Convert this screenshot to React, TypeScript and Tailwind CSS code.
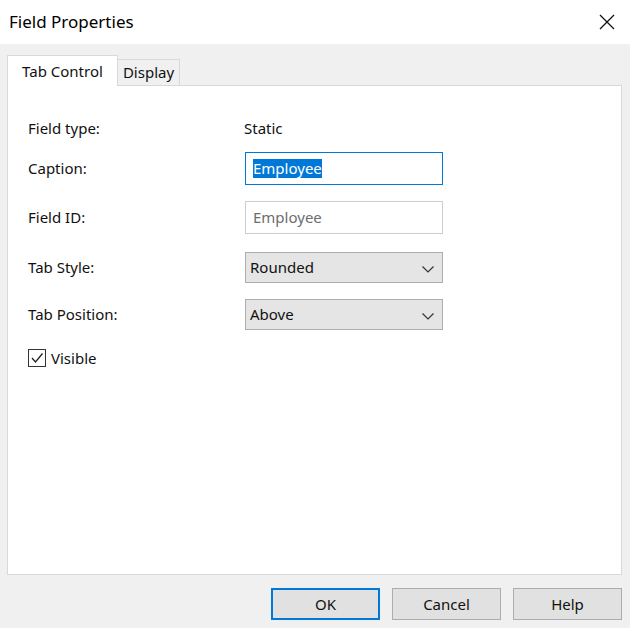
import React from "react";

const Chevron = () => (
  <svg width="14" height="14" viewBox="0 0 14 14" className="absolute right-[7px] top-[9px]">
    <path d="M1.5 4.5 L7 10 L12.5 4.5" fill="none" stroke="#333" strokeWidth="1.2" />
  </svg>
);

export default function App() {
  const font = { fontFamily: '"Noto Sans", "Open Sans", sans-serif' };
  return (
    <div className="w-[630px] h-[628px] bg-[#f0f0f0] flex flex-col text-[15px] text-[#111]" style={font}>
      <div className="h-[44px] bg-white flex items-center justify-between pl-[9px] pr-[14px] shrink-0">
        <span className="text-[17px] text-black">Field Properties</span>
        <svg width="18" height="18" viewBox="0 0 18 18"><path d="M2 2 L16 16 M16 2 L2 16" stroke="#111" strokeWidth="1.3" /></svg>
      </div>
      <div className="pl-[7px] pr-[8px] pt-[11px] flex flex-col">
        <div className="flex items-end h-[30px]">
          <div className="w-[111px] h-[31px] bg-white border border-b-0 border-[#d9d9d9] flex items-center justify-center relative top-[1px] z-10">Tab Control</div>
          <div className="w-[62px] h-[26px] bg-[#f0f0f0] border border-b-0 border-l-0 border-[#d9d9d9] flex items-center justify-center">Display</div>
        </div>
        <div className="h-[490px] bg-white border border-[#d9d9d9] pl-[20px] pt-[30px] flex flex-col">
          <div className="flex items-center h-[24px]">
            <span className="w-[216px]">Field type:</span><span>Static</span>
          </div>
          <div className="flex items-center mt-[12px]">
            <span className="w-[217px]">Caption:</span>
            <div className="w-[198px] h-[33px] border border-[#0078d7] flex items-center pl-[7px]">
              <span className="bg-[#0078d7] text-white leading-[19px]">Employee</span>
            </div>
          </div>
          <div className="flex items-center mt-[16px]">
            <span className="w-[217px]">Field ID:</span>
            <div className="w-[198px] h-[33px] border border-[#cccccc] flex items-center pl-[7px] text-[#6d6d6d]">Employee</div>
          </div>
          <div className="flex items-center mt-[18px]">
            <span className="w-[217px]">Tab Style:</span>
            <div className="relative w-[198px] h-[31px] border border-[#adadad] bg-[#e5e5e5] flex items-center pl-[4px]">Rounded<Chevron /></div>
          </div>
          <div className="flex items-center mt-[16px]">
            <span className="w-[217px]">Tab Position:</span>
            <div className="relative w-[198px] h-[31px] border border-[#adadad] bg-[#e5e5e5] flex items-center pl-[4px]">Above<Chevron /></div>
          </div>
          <div className="flex items-center mt-[17px]">
            <div className="w-[18px] h-[18px] border border-[#333] flex items-center justify-center bg-white">
              <svg width="14" height="14" viewBox="0 0 14 14"><path d="M2 7 L5.5 11 L12.5 2.5" fill="none" stroke="#222" strokeWidth="1.3" /></svg>
            </div>
            <span className="ml-[5px]">Visible</span>
          </div>
        </div>
        <div className="flex justify-end gap-[12px] mt-[13px]">
          <button className="w-[109px] h-[32px] border-2 border-[#0078d7] bg-[#e1e1e1]">OK</button>
          <button className="w-[109px] h-[32px] border border-[#adadad] bg-[#e1e1e1]">Cancel</button>
          <button className="w-[109px] h-[32px] border border-[#adadad] bg-[#e1e1e1]">Help</button>
        </div>
      </div>
    </div>
  );
}
